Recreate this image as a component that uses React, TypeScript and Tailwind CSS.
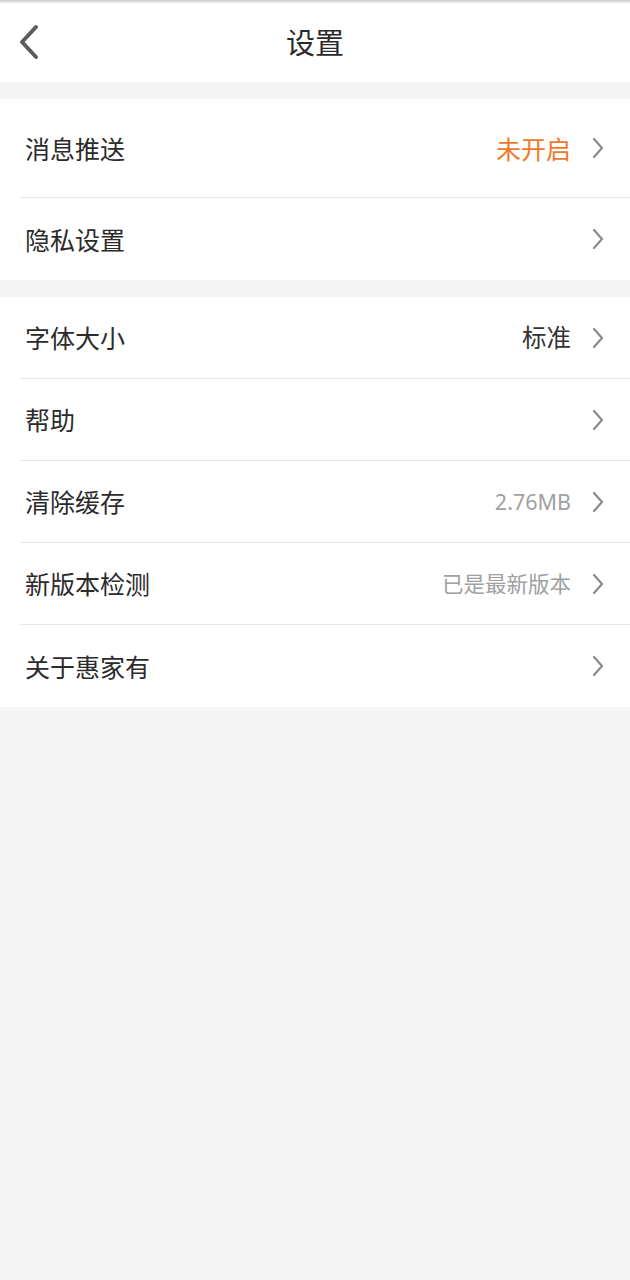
const font = "font-['Noto_Sans_CJK_SC','Noto_Sans',sans-serif]";

type Row = {
  label: string;
  value?: string;
  tone?: 'orange' | 'dark' | 'gray';
  tall?: boolean;
};

const sectionOne: Row[] = [
  { label: '消息推送', value: '未开启', tone: 'orange', tall: true },
  { label: '隐私设置' },
];

const sectionTwo: Row[] = [
  { label: '字体大小', value: '标准', tone: 'dark' },
  { label: '帮助' },
  { label: '清除缓存', value: '2.76MB', tone: 'gray' },
  { label: '新版本检测', value: '已是最新版本', tone: 'gray' },
  { label: '关于惠家有' },
];

function Chevron() {
  return (
    <svg width="14" height="22" viewBox="0 0 14 22" fill="none" className="ml-[20px] shrink-0">
      <path d="M3 2l8 9-8 9" stroke="#8a8a8a" strokeWidth="2.2" strokeLinecap="round" strokeLinejoin="round" />
    </svg>
  );
}

function SettingRow({ row, last }: { row: Row; last: boolean }) {
  const valueClass =
    row.tone === 'orange'
      ? 'text-[25px] text-[#f0782c]'
      : row.tone === 'dark'
        ? 'text-[24.5px] text-[#333333]'
        : "text-[21.5px] text-[#a0a0a0] font-['Noto_Sans','Noto_Sans_CJK_SC',sans-serif]";

  return (
    <div className="pl-[20px]">
      <div
        className={`flex items-center pr-[25px] ${row.tall ? 'h-[99px]' : 'h-[82px]'} ${last ? '' : 'border-b border-[#e6e6e6]'}`}
      >
        <span className="pl-[5px] flex-1 text-[25px] text-[#2b2b2b] leading-none">{row.label}</span>
        {row.value && <span className={`leading-none ${valueClass}`}>{row.value}</span>}
        <Chevron />
      </div>
    </div>
  );
}

export default function App() {
  return (
    <div className={`${font} w-[630px] h-[1280px] bg-[#f4f4f4] flex flex-col`}>
      {/* Header */}
      <div className="bg-white h-[82px] relative flex items-center justify-center">
        <div className="absolute top-0 left-0 right-0 h-[4px] bg-gradient-to-b from-[#c8c8c8] to-white" />
        <button className="absolute left-[14px] top-[22px] w-[30px] h-[40px] flex items-center justify-center">
          <svg width="26" height="36" viewBox="0 0 26 36" fill="none">
            <path d="M20 3L6 18l14 15" stroke="#5c5c5c" strokeWidth="4" strokeLinecap="round" strokeLinejoin="round" />
          </svg>
        </button>
        <h1 className="text-[29px] text-[#2b2b2b] leading-none">设置</h1>
      </div>

      <div className="h-[17px]" />

      <div className="bg-white">
        {sectionOne.map((r, i) => (
          <SettingRow key={r.label} row={r} last={i === sectionOne.length - 1} />
        ))}
      </div>

      <div className="h-[17px]" />

      <div className="bg-white">
        {sectionTwo.map((r, i) => (
          <SettingRow key={r.label} row={r} last={i === sectionTwo.length - 1} />
        ))}
      </div>
    </div>
  );
}
